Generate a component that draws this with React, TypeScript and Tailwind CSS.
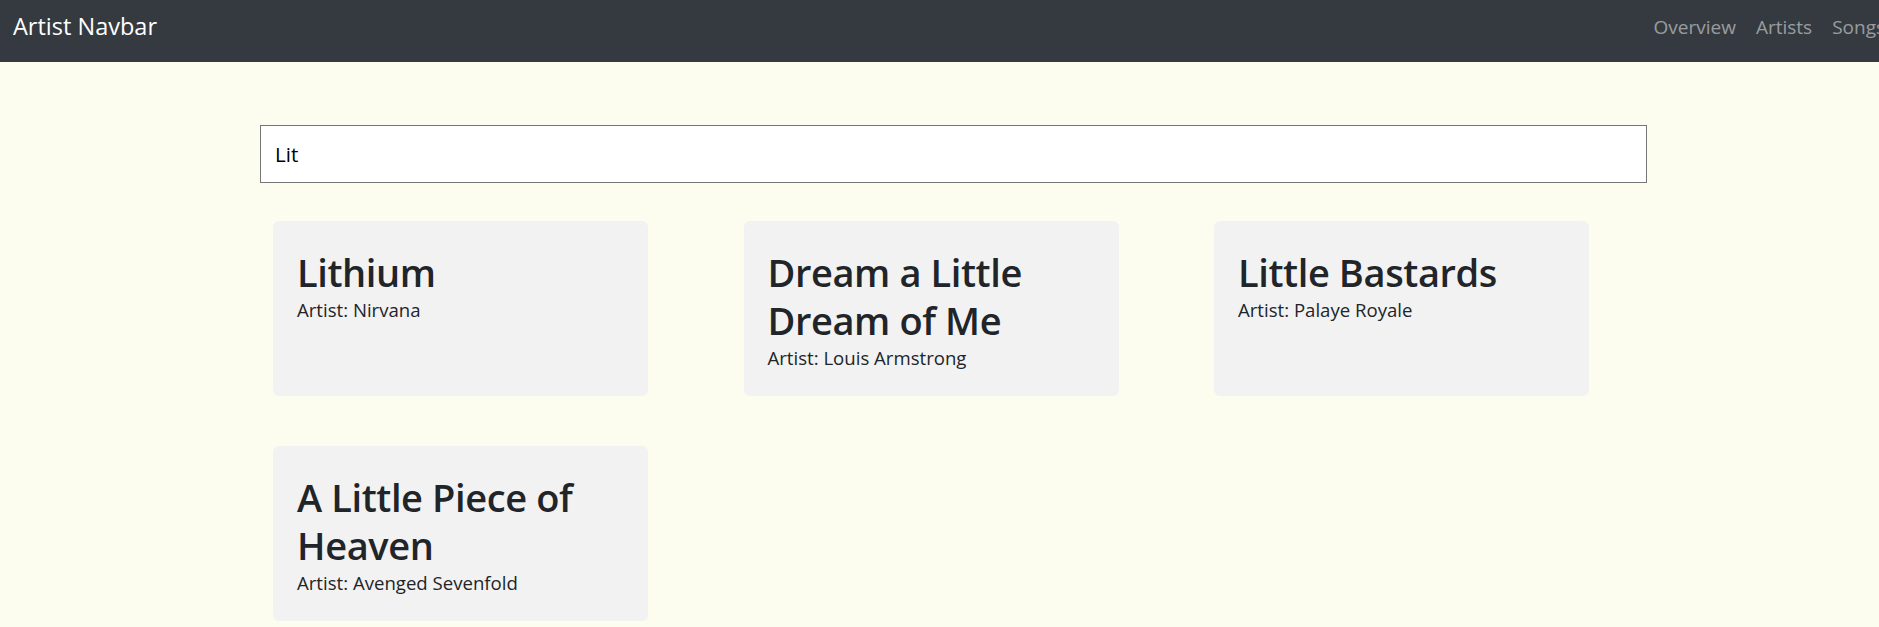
const songs = [
  { title: 'Lithium', artist: 'Nirvana' },
  { title: 'Dream a Little Dream of Me', artist: 'Louis Armstrong' },
  { title: 'Little Bastards', artist: 'Palaye Royale' },
  { title: 'A Little Piece of Heaven', artist: 'Avenged Sevenfold' },
]

const links = ['Overview', 'Artists', 'Songs']

export default function App() {
  return (
    <div className="min-h-screen overflow-x-hidden bg-[#fcfdef] font-['Open_Sans',sans-serif] text-[#212529]">
      <Navbar />
      <main className="pb-8">
        <SearchBox />
        <SongGrid />
      </main>
    </div>
  )
}

function Navbar() {
  return (
    <nav className="flex h-[62px] items-center bg-[#343a40] pb-[8px] pl-[13px]">
      <span className="text-[23.5px] text-white">Artist Navbar</span>
      <div className="ml-auto -mr-[6px] flex shrink-0 items-center gap-[20px]">
        {links.map((link) => (
          <a key={link} href="#" className="text-[19px] text-white/50">
            {link}
          </a>
        ))}
      </div>
    </nav>
  )
}

function SearchBox() {
  return (
    <div className="ml-[260px] pt-[63px]">
      <input
        type="text"
        defaultValue="Lit"
        className="h-[58px] w-[1387px] border border-[#767676] bg-white pl-[14px] text-[20.5px] text-black outline-none"
      />
    </div>
  )
}

function SongGrid() {
  return (
    <div className="mt-[38px] ml-[273px] grid w-fit grid-cols-[375px_375px_375px] gap-x-[95.5px] gap-y-[50px]">
      {songs.map((song) => (
        <div key={song.title} className="rounded-[6px] bg-[#f2f2f2] px-[24px] pt-[27px] pb-[24px]">
          <h2 className="text-[38px] leading-[48px] font-semibold tracking-[-0.4px]">{song.title}</h2>
          <p className="text-[18.6px] leading-[28px]">Artist: {song.artist}</p>
        </div>
      ))}
    </div>
  )
}
